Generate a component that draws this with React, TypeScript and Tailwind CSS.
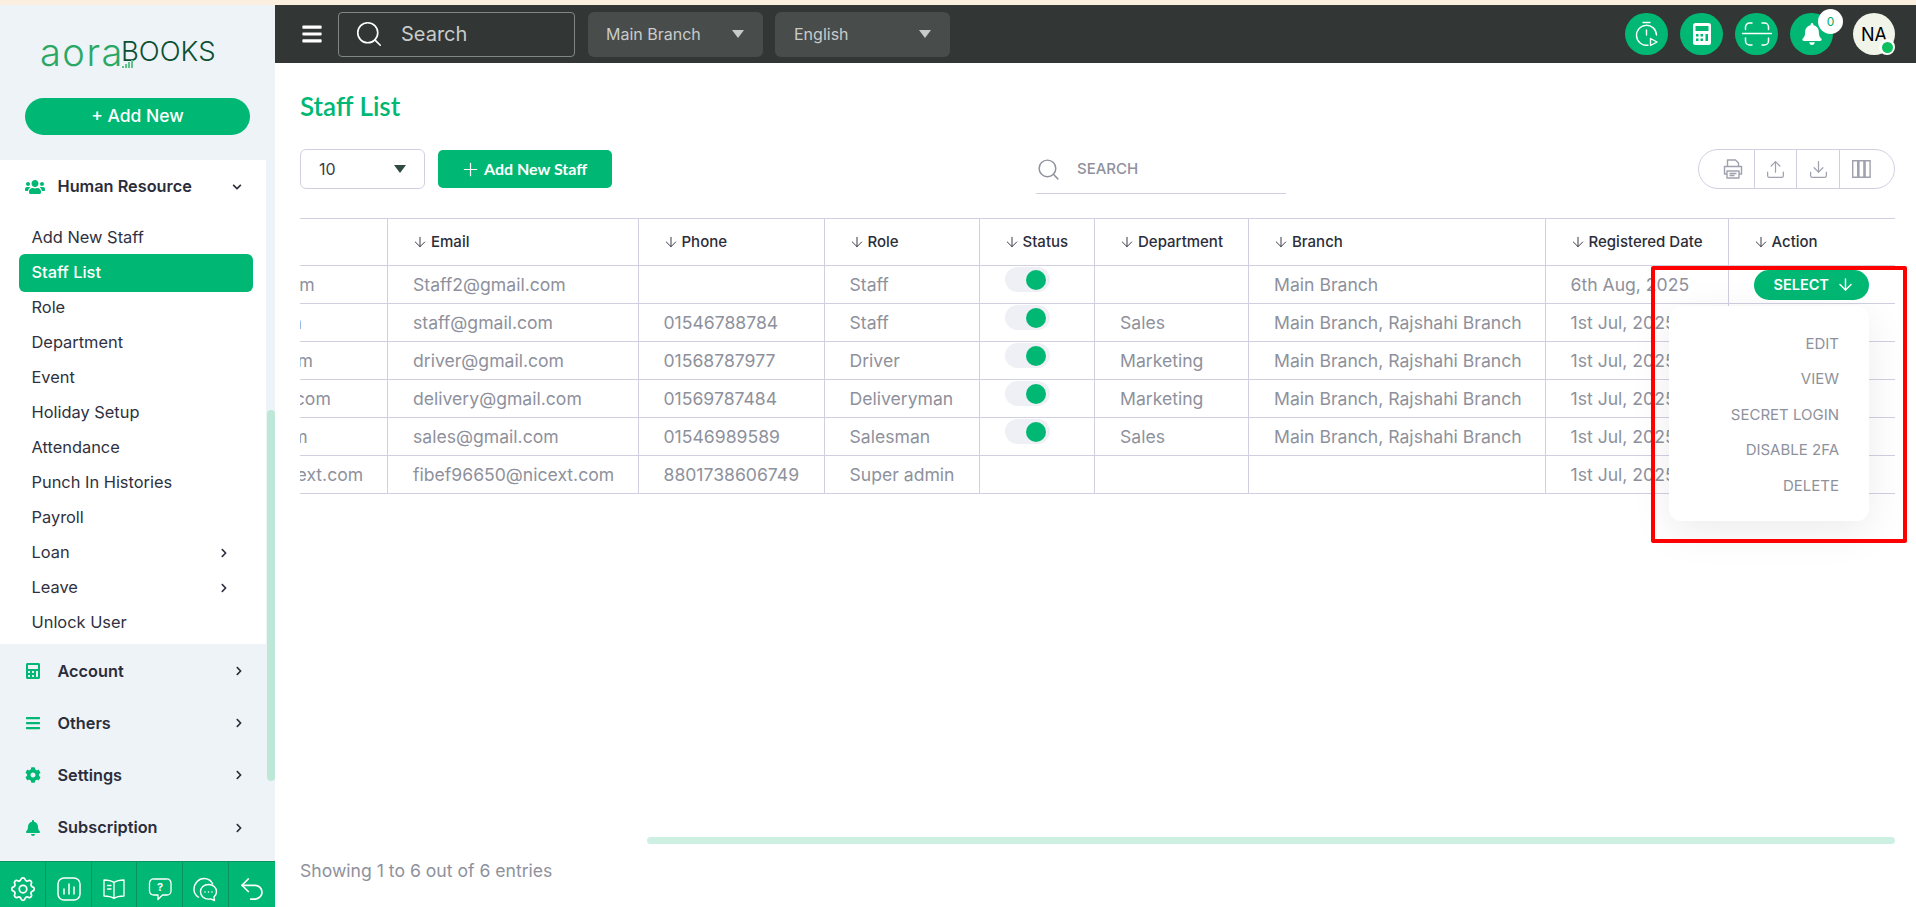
import React from "react";
import { ArrowDown, Plus, Search, Undo2, Upload, Download } from "lucide-react";
import { FaUsers, FaCalculator, FaBars, FaCog, FaBell, FaChevronDown, FaChevronRight } from "react-icons/fa";
import { TbSettings } from "react-icons/tb";

const sub: { t: string; chev?: boolean; active?: boolean }[] = [
  { t: "Add New Staff" },
  { t: "Staff List", active: true },
  { t: "Role" },
  { t: "Department" },
  { t: "Event" },
  { t: "Holiday Setup" },
  { t: "Attendance" },
  { t: "Punch In Histories" },
  { t: "Payroll" },
  { t: "Loan", chev: true },
  { t: "Leave", chev: true },
  { t: "Unlock User" },
];

const groups = [
  { t: "Account", I: FaCalculator },
  { t: "Others", I: FaBars },
  { t: "Settings", I: FaCog },
  { t: "Subscription", I: FaBell },
];

const cols = ["", "Email", "Phone", "Role", "Status", "Department", "Branch", "Registered Date", "Action"];
const widths = [251, 250.5, 186, 155, 115.5, 154, 296.5, 183, 167];

const rows = [
  ["Staff2@gmail.com", "", "Staff", true, "", "Main Branch", "6th Aug, 2025"],
  ["staff@gmail.com", "01546788784", "Staff", true, "Sales", "Main Branch, Rajshahi Branch", "1st Jul, 2025"],
  ["driver@gmail.com", "01568787977", "Driver", true, "Marketing", "Main Branch, Rajshahi Branch", "1st Jul, 2025"],
  ["delivery@gmail.com", "01569787484", "Deliveryman", true, "Marketing", "Main Branch, Rajshahi Branch", "1st Jul, 2025"],
  ["sales@gmail.com", "01546989589", "Salesman", true, "Sales", "Main Branch, Rajshahi Branch", "1st Jul, 2025"],
  ["fibef96650@nicext.com", "8801738606749", "Super admin", false, "", "", "1st Jul, 2025"],
] as const;

function Toggle() {
  return (
    <div className="flex h-[25px] w-[45px] items-center justify-end rounded-full bg-[#eef0f5] pr-[4px]">
      <div className="h-[20px] w-[20px] rounded-full bg-[#00b873]" />
    </div>
  );
}

function HeaderCircle({ children }: { children: React.ReactNode }) {
  return <div className="flex h-[42px] w-[43px] items-center justify-center rounded-full bg-[#00b873]">{children}</div>;
}

function Caret({ className }: { className: string }) {
  return (
    <svg width="12" height="8" viewBox="0 0 12 8" className={className}>
      <path d="M0 0h12L6 8z" fill="currentColor" />
    </svg>
  );
}

export default function App() {
  return (
    <div className="relative flex h-[907px] w-[1916px] flex-col overflow-hidden bg-white font-['Inter',sans-serif]">
      <div className="h-[5px] bg-[#fbf0df]" />
      <div className="flex min-h-0 flex-1">
        {/* Sidebar */}
        <aside className="relative flex w-[275px] flex-col bg-[#eef3f8]">
          <div className="flex h-[93px] items-start pl-[40px] pt-[27px]">
            <div className="relative flex h-[40px] items-center leading-none">
              <span className="text-[38px] font-light tracking-[1.5px] text-[#2aa863]">aora</span>
              <svg width="12" height="10" viewBox="0 0 12 10" className="absolute left-[82px] top-[26px]">
                <path d="M0 8h2v2H0zM3 6h2v4H3zM6 4h2v6H6zM9 2h2v8H9z" fill="#5fc48c" />
              </svg>
              <span className="-ml-[3px] text-[27.5px] font-light text-[#0b4f33]">BOOKS</span>
            </div>
          </div>
          <div className="px-[25px]">
            <div className="flex h-[37px] items-center justify-center rounded-full bg-[#00b873] text-[17.5px] font-medium text-white">+ Add New</div>
          </div>
          <div className="mt-[25px] w-[266px] bg-white pb-[4px]">
            <div className="flex h-[60px] items-center pb-[7px] pl-[25px] pr-[24px] text-[#2b2d3a]">
              <FaUsers className="h-[20px] w-[20px] text-[#00b873]" />
              <span className="ml-[12.5px] flex-1 text-[16.3px] font-semibold">Human Resource</span>
              <FaChevronDown className="h-[10px] w-[10px]" />
            </div>
            {sub.map((s) =>
              s.active ? (
                <div key={s.t} className="-my-[1.5px] ml-[19px] mr-[13px] flex h-[38px] items-center rounded-md bg-[#00b873] pl-[12.5px] text-[16.4px] font-medium text-white">
                  {s.t}
                </div>
              ) : (
                <div key={s.t} className="flex h-[35px] items-center pl-[31.5px] pr-[37px] text-[16.4px] text-[#2f3140]">
                  <span className="flex-1">{s.t}</span>
                  {s.chev && <FaChevronRight className="h-[10px] w-[10px]" />}
                </div>
              )
            )}
          </div>
          <div className="mt-[1px]">
            {groups.map(({ t, I }) => (
              <div key={t} className="flex h-[52.2px] w-[266px] items-center pl-[25px] pr-[22px] text-[#2b2d3a]">
                <I className="h-[16px] w-[16px] text-[#00b873]" />
                <span className="ml-[16.5px] flex-1 text-[16.3px] font-semibold">{t}</span>
                <FaChevronRight className="h-[10px] w-[10px]" />
              </div>
            ))}
          </div>
          <div className="mt-auto flex h-[46px] divide-x divide-[#0a9461] border-t border-[#0a9461] bg-[#00b873] text-white">
            <div className="flex w-[46px] items-center justify-center pt-[9px]">
              <TbSettings className="h-[30px] w-[30px]" strokeWidth={1.4} />
            </div>
            <div className="flex w-[46px] items-center justify-center pt-[9px]">
              <svg width="24" height="24" viewBox="0 0 24 24" fill="none" stroke="currentColor" strokeWidth="1.5" strokeLinecap="round">
                <rect x="1" y="1" width="22" height="22" rx="6" />
                <path d="M7 17v-5M12 17V7M17 17v-7" />
              </svg>
            </div>
            <div className="flex w-[45px] items-center justify-center pt-[9px]">
              <svg width="26" height="24" viewBox="0 0 24 24" fill="none" stroke="currentColor" strokeWidth="1.3" strokeLinejoin="round" strokeLinecap="round">
                <path d="M12 5.5C9.5 3.8 6 3 2 3v16c4 0 7.500.7 10 2.500 2.500-1.800 6-2.500 10-2.500V3c-4 0-7.500.8-10 2.500zM12 5.500v16M5.500 8.500H9M5.500 12H9" />
              </svg>
            </div>
            <div className="flex w-[46px] items-center justify-center pt-[9px]">
              <svg width="24" height="24" viewBox="0 0 24 24" fill="none" stroke="currentColor" strokeWidth="1.3" strokeLinejoin="round">
                <path d="M6 2h12.500A4 4 0 0 1 23 6v8a4 4 0 0 1-4 4h-4.500L10 22.500V18H6a4.500 4.500 0 0 1-4.500-4V6A4 4 0 0 1 6 2z" />
                <text x="12" y="14" textAnchor="middle" fontSize="11" fontWeight="700" fill="currentColor" stroke="none">?</text>
              </svg>
            </div>
            <div className="flex w-[46px] items-center justify-center pt-[9px]">
              <svg width="25" height="25" viewBox="0 0 25 25" fill="none" stroke="currentColor" strokeWidth="1.4" strokeLinejoin="round">
                <path d="M6 20.500C3 18.800 1 15.800 1 12.500 1 6.500 5.500 1.500 11 1.500c4.500 0 7.500 2.500 9 6" />
                <path d="M15.500 7.500c4.500 0 8 3.200 8 7.200 0 2.300-1 4-2.600 5.300l.6 3.500-3.800-1.700c-.7.200-1.400.3-2.200.3-4.500 0-8-3.200-8-7.400s3.500-7.200 8-7.200z" />
                <circle cx="12" cy="15" r=".8" fill="currentColor" stroke="none" />
                <circle cx="15.500" cy="15" r=".8" fill="currentColor" stroke="none" />
                <circle cx="19" cy="15" r=".8" fill="currentColor" stroke="none" />
              </svg>
            </div>
            <div className="flex flex-1 items-center justify-center pt-[9px]">
              <Undo2 className="h-[30px] w-[30px]" strokeWidth={1.4} />
            </div>
          </div>
          <div className="absolute right-0 top-[405px] h-[371px] w-[8px] rounded-[4px] bg-[#bde8d8]" />
        </aside>

        {/* Main */}
        <div className="flex min-w-0 flex-1 flex-col">
          <header className="flex h-[58px] items-center bg-[#323635] pl-[26px] pr-[21px]">
            <FaBars className="h-[22px] w-[22px] text-white" />
            <div className="ml-[15px] flex h-[45px] w-[237px] items-center rounded-[4px] border border-[#7f8785] pl-[15px] text-[#c9cbca]">
              <Search className="h-[30px] w-[30px] text-white" strokeWidth={1.3} />
              <span className="ml-[17px] text-[20px]">Search</span>
            </div>
            <div className="ml-[13px] flex h-[45px] w-[175px] items-center rounded-md bg-[#484c4b] pl-[18px] pr-[19px] text-[16px] text-[#c9cbca]">
              <span className="flex-1">Main Branch</span>
              <Caret className="text-[#c9cbca]" />
            </div>
            <div className="ml-[12px] flex h-[45px] w-[175px] items-center rounded-md bg-[#484c4b] pl-[19px] pr-[19px] text-[16px] text-[#c9cbca]">
              <span className="flex-1">English</span>
              <Caret className="text-[#c9cbca]" />
            </div>
            <div className="ml-auto flex items-center">
              <HeaderCircle>
                <svg width="24" height="26" viewBox="0 0 24 26" fill="none" stroke="white" strokeWidth="1.4" strokeLinecap="round">
                  <path d="M8 1.500h7M11.500 9v5" />
                  <path d="M13 24.200A10 10 0 1 1 21.500 14" />
                  <path d="M15.500 17.500l6.500 3.500-6.500 3.500z" strokeLinejoin="round" />
                </svg>
              </HeaderCircle>
              <div className="ml-[12px]">
                <HeaderCircle>
                  <svg width="18" height="22" viewBox="0 0 18 22">
                    <rect width="18" height="22" rx="2.500" fill="white" />
                    <rect x="2.500" y="3" width="13" height="5" fill="#00b873" />
                    <g fill="#00b873">
                      <rect x="3" y="11" width="2.500" height="2.500" />
                      <rect x="7.500" y="11" width="2.500" height="2.500" />
                      <rect x="12.500" y="11" width="2.500" height="7" />
                      <rect x="3" y="15.500" width="2.500" height="2.500" />
                      <rect x="7.500" y="15.500" width="2.500" height="2.500" />
                    </g>
                  </svg>
                </HeaderCircle>
              </div>
              <div className="ml-[12px]">
                <HeaderCircle>
                  <svg width="30" height="24" viewBox="0 0 30 24" fill="none" stroke="white" strokeWidth="1.500" strokeLinecap="round">
                    <path d="M0.500 11.500h29" />
                    <path d="M10 1H7.500A4 4 0 0 0 3.500 5v2.500M20 1h2.500a4 4 0 0 1 4 4v2.500M10 23H7.500a4 4 0 0 1-4-4v-3M20 23h2.500a4 4 0 0 0 4-4v-3" />
                  </svg>
                </HeaderCircle>
              </div>
              <div className="relative ml-[12px]">
                <HeaderCircle>
                  <FaBell className="h-[22px] w-[20px] text-white" />
                </HeaderCircle>
                <div className="absolute -right-[10px] -top-[4px] flex h-[25px] w-[25px] items-center justify-center rounded-full bg-white text-[12px] text-[#00a96a]">0</div>
              </div>
              <div className="relative ml-[20px] flex h-[42px] w-[42px] items-center justify-center rounded-full bg-[#f1f5e9] text-[18px] text-black">
                NA
                <div className="absolute bottom-0 right-0 flex h-[16px] w-[16px] items-center justify-center rounded-full bg-white">
                  <div className="h-[11px] w-[11px] rounded-full bg-[#0cc05f]" />
                </div>
              </div>
            </div>
          </header>

          <main className="flex min-h-0 flex-1 flex-col pl-[25px] pr-[21px]">
            <h1 className="mt-[26px] text-[26px] font-semibold leading-[34px] text-[#00b873] font-['Lato',sans-serif]">Staff List</h1>
            <div className="mt-[26px] flex h-[40px] items-center">
              <div className="flex h-[40px] w-[125px] items-center rounded-md border border-[#d1d0e3] pl-[18px] pr-[18px] text-[16px] text-[#3a3c48]">
                <span className="flex-1">10</span>
                <Caret className="text-[#2f4a43]" />
              </div>
              <div className="ml-[13px] flex h-[38px] w-[174px] items-center rounded-[5px] bg-[#00b873] pl-[22px] text-white">
                <Plus className="h-[21px] w-[21px]" strokeWidth={1.4} />
                <span className="ml-[3px] text-[16px] font-bold font-['Lato',sans-serif]">Add New Staff</span>
              </div>
              <div className="ml-[424px] flex h-[45px] w-[250px] items-center self-start border-b border-[#d1d0e3] pb-[4px]">
                <Search className="h-[25px] w-[25px] text-[#8f919d]" strokeWidth={1.4} />
                <span className="ml-[16px] text-[15px] font-medium text-[#8f919d]">SEARCH</span>
              </div>
              <div className="ml-auto flex h-[40px] w-[197px] items-center rounded-full border border-[#d1d0e3] text-[#a0a1ae]">
                <div className="flex h-full w-[55px] items-center justify-end pr-[11px]">
                  <svg width="20" height="20" viewBox="0 0 20 20" fill="none" stroke="currentColor" strokeWidth="1.400" strokeLinejoin="round">
                    <path d="M4.500 7V1h8l3 3v3" />
                    <path d="M4 15H1.500V7.500h17V15H16" />
                    <path d="M4 12h12v7H4zM6.500 14.500h7M6.500 16.500h5" />
                  </svg>
                </div>
                <div className="flex h-full w-[42px] items-center justify-center border-l border-[#d1d0e3]">
                  <Upload className="h-[21px] w-[21px]" strokeWidth={1.4} />
                </div>
                <div className="flex h-full w-[43px] items-center justify-center border-l border-[#d1d0e3]">
                  <Download className="h-[21px] w-[21px]" strokeWidth={1.4} />
                </div>
                <div className="flex h-full flex-1 items-center justify-start border-l border-[#d1d0e3] pl-[12px]">
                  <svg width="19" height="18" viewBox="0 0 19 18" fill="none" stroke="currentColor" strokeWidth="1.400">
                    <path d="M.7.700h5v16.600h-5zM6.900.700h5v16.600h-5zM13.100.700h5v16.600h-5z" />
                  </svg>
                </div>
              </div>
            </div>

            <div className="relative mt-[29px]">
              <div className="w-[1595px] overflow-hidden">
                <table className="-ml-[164px] w-[1759px] table-fixed border-collapse text-left">
                  <colgroup>
                    {widths.map((w, i) => (
                      <col key={i} style={{ width: w }} />
                    ))}
                  </colgroup>
                  <thead>
                    <tr className="h-[47px]">
                      {cols.map((c, i) => (
                        <th key={i} className="border border-[#d1d0e3] pl-[25px] text-[15px] font-medium text-[#2b2d3a]">
                          {c && (
                            <span className="flex items-center">
                              <ArrowDown className="-ml-[1px] mr-[3px] h-[16px] w-[16px]" strokeWidth={1.4} />
                              {c}
                            </span>
                          )}
                        </th>
                      ))}
                    </tr>
                  </thead>
                  <tbody>
                    {rows.map((r, i) => (
                      <tr key={i} className="h-[38px] text-[17.6px] text-[#8e919c]">
                        <td className="whitespace-nowrap border border-[#d1d0e3] pl-[25px] pt-[2px]">{r[0]}</td>
                        <td className="whitespace-nowrap border border-[#d1d0e3] pl-[25px] pt-[2px]">{r[0]}</td>
                        <td className="whitespace-nowrap border border-[#d1d0e3] pl-[25px] pt-[2px]">{r[1]}</td>
                        <td className="whitespace-nowrap border border-[#d1d0e3] pl-[25px] pt-[2px]">{r[2]}</td>
                        <td className="border border-[#d1d0e3] pl-[25px] align-top pt-[1px]">{r[3] && <Toggle />}</td>
                        <td className="whitespace-nowrap border border-[#d1d0e3] pl-[25px] pt-[2px]">{r[4]}</td>
                        <td className="whitespace-nowrap border border-[#d1d0e3] pl-[25px] pt-[2px]">{r[5]}</td>
                        <td className="whitespace-nowrap border border-[#d1d0e3] pl-[25px] pt-[2px]">{r[6]}</td>
                        <td className="border border-[#d1d0e3] pl-[25px]">
                          {i === 0 && (
                            <div className="flex h-[30px] w-[115px] items-center rounded-full bg-[#00b873] pl-[20px] text-[14.5px] font-semibold text-white">
                              SELECT
                              <ArrowDown className="ml-[7px] h-[19px] w-[19px]" strokeWidth={1.8} />
                            </div>
                          )}
                        </td>
                      </tr>
                    ))}
                  </tbody>
                </table>
              </div>
              {/* Dropdown */}
              <div className="absolute left-[1369px] top-[88px] flex h-[215px] w-[200px] flex-col items-end rounded-[12px] bg-white pr-[30px] pt-[20px] text-[15px] text-[#8e919c] shadow-[0_10px_40px_rgba(0,0,0,0.08)]">
                {["EDIT", "VIEW", "SECRET LOGIN", "DISABLE 2FA", "DELETE"].map((t) => (
                  <div key={t} className="flex h-[35.500px] items-center">{t}</div>
                ))}
              </div>
              {/* Annotation */}
              <div className="absolute left-[1351px] top-[48px] h-[277px] w-[256px] rounded-[2px] border-[4px] border-[#ff0000]" />
            </div>

            <div className="mb-[23px] mt-auto">
              <div className="ml-[347px] h-[7px] w-[1248px] rounded-full bg-[#cdf0e2]" />
              <div className="mt-[14px] text-[17.6px] text-[#8e919c]">Showing 1 to 6 out of 6 entries</div>
            </div>
          </main>
        </div>
      </div>
    </div>
  );
}
